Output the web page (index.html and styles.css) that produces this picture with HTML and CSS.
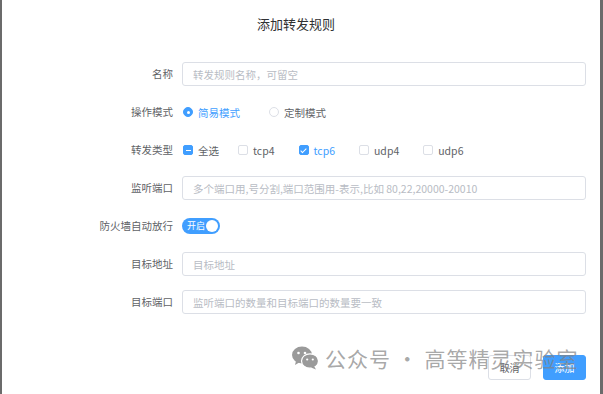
FILE: index.html
```html
<!DOCTYPE html>
<html>
  <head>
    <title>添加转发规则</title>
    <meta charset="UTF-8">
    <link rel="stylesheet" href="styles.css">
  </head>
  <body>
    <div class="dialog">
      <div class="dialog-title">添加转发规则</div>

      <div class="form">
        <div class="row">
          <label class="label">名称</label>
          <div class="field"><input class="text-input" type="text" placeholder="转发规则名称，可留空"></div>
        </div>

        <div class="row">
          <label class="label">操作模式</label>
          <div class="field options">
            <span class="option active radio-first"><span class="radio checked"></span>简易模式</span>
            <span class="option"><span class="radio"></span>定制模式</span>
          </div>
        </div>

        <div class="row">
          <label class="label">转发类型</label>
          <div class="field options">
            <span class="option check-all"><span class="box half"></span>全选</span>
            <span class="option"><span class="box"></span>tcp4</span>
            <span class="option active"><span class="box checked"></span>tcp6</span>
            <span class="option"><span class="box"></span>udp4</span>
            <span class="option"><span class="box"></span>udp6</span>
          </div>
        </div>

        <div class="row">
          <label class="label">监听端口</label>
          <div class="field"><input class="text-input" type="text" placeholder="多个端口用,号分割,端口范围用-表示,比如 80,22,20000-20010"></div>
        </div>

        <div class="row">
          <label class="label">防火墙自动放行</label>
          <div class="field">
            <span class="switch"><span class="switch-text">开启</span><span class="knob"></span></span>
          </div>
        </div>

        <div class="row">
          <label class="label">目标地址</label>
          <div class="field"><input class="text-input" type="text" placeholder="目标地址"></div>
        </div>

        <div class="row">
          <label class="label">目标端口</label>
          <div class="field"><input class="text-input" type="text" placeholder="监听端口的数量和目标端口的数量要一致"></div>
        </div>
      </div>

      <div class="footer">
        <button class="btn">取消</button>
        <button class="btn btn-primary">添加</button>
      </div>

      <!-- watermark over the footer -->
      <div class="watermark">
        <svg width="27" height="24" viewBox="0 0 27 24">
          <ellipse cx="10" cy="9" rx="10" ry="8.5" fill="#9a9a9a"/>
          <path d="M4 15 L3 19 L8 16 Z" fill="#9a9a9a"/>
          <circle cx="6.5" cy="7" r="1.3" fill="#fff"/>
          <circle cx="13" cy="7" r="1.3" fill="#fff"/>
          <ellipse cx="18" cy="15" rx="8.5" ry="7.2" fill="#9a9a9a" stroke="#fff" stroke-width="1.2"/>
          <path d="M22 20 L24 23.5 L19 21.5 Z" fill="#9a9a9a"/>
          <circle cx="15.2" cy="13.5" r="1.1" fill="#fff"/>
          <circle cx="20.8" cy="13.5" r="1.1" fill="#fff"/>
        </svg>
        <span>公众号 · 高等精灵实验室</span>
      </div>
    </div>
  </body>
</html>
```

FILE: styles.css
```css
html, body {
    margin: 0;
    padding: 0;
}
body {
    background-color: #6b6b6b;
    font-family: "Noto Sans CJK SC", "Noto Sans", sans-serif;
    color: #606266;
}
.dialog {
    position: relative;
    margin: 0 3px 0 2px;
    height: 394px;
    background-color: #fff;
}
.dialog-title {
    height: 62px;
    padding-top: 15px;
    padding-right: 10px;
    box-sizing: border-box;
    text-align: center;
    font-size: 13px;
    line-height: 18px;
    color: #303133;
}
.form {
    display: flex;
    flex-direction: column;
    gap: 14px;
    padding-right: 14px;
}
.row {
    display: grid;
    grid-template-columns: 171px 1fr;
    column-gap: 9px;
    height: 24px;
    align-items: center;
}
.label {
    text-align: right;
    font-size: 10.5px;
    line-height: 24px;
    color: #606266;
}
.field {
    height: 24px;
    display: flex;
    align-items: center;
}
.text-input {
    width: 100%;
    height: 24px;
    box-sizing: border-box;
    border: 1px solid #dcdfe6;
    border-radius: 3px;
    padding: 0 10px;
    font-family: inherit;
    font-size: 10.5px;
    color: #606266;
    outline: none;
}
.text-input::placeholder {
    color: #b8bcc4;
}
.options {
    font-size: 10.5px;
}
.option {
    display: flex;
    align-items: center;
    color: #606266;
    margin-right: 24px;
}
.options .option:first-child {
    margin-left: 1px;
}
.option.active {
    color: #409eff;
}
.radio-first {
    margin-right: 29px;
}
.check-all {
    margin-right: 19px;
}
.radio {
    width: 10px;
    height: 10px;
    border: 1px solid #dcdfe6;
    border-radius: 50%;
    box-sizing: border-box;
    margin-right: 5px;
    background-color: #fff;
}
.radio.checked {
    border-color: #409eff;
    background-color: #409eff;
    position: relative;
}
.radio.checked::after {
    content: "";
    position: absolute;
    left: 2.5px;
    top: 2.5px;
    width: 3px;
    height: 3px;
    border-radius: 50%;
    background-color: #fff;
}
.box {
    position: relative;
    width: 10px;
    height: 10px;
    box-sizing: border-box;
    border: 1px solid #dcdfe6;
    border-radius: 2px;
    margin-right: 5px;
    background-color: #fff;
}
.box.half,
.box.checked {
    background-color: #409eff;
    border-color: #409eff;
}
.box.half::after {
    content: "";
    position: absolute;
    left: 1.5px;
    top: 3.5px;
    width: 5px;
    height: 1px;
    background-color: #fff;
}
.box.checked::after {
    content: "";
    position: absolute;
    left: 2.5px;
    top: 0.5px;
    width: 2px;
    height: 5px;
    border: solid #fff;
    border-width: 0 1px 1px 0;
    transform: rotate(45deg);
}
.switch {
    display: inline-flex;
    align-items: center;
    justify-content: space-between;
    width: 38px;
    height: 16px;
    border-radius: 8px;
    background-color: #409eff;
    box-sizing: border-box;
    padding: 0 2px 0 5px;
}
.switch-text {
    color: #fff;
    font-size: 9px;
    line-height: 16px;
}
.knob {
    width: 12px;
    height: 12px;
    border-radius: 50%;
    background-color: #fff;
}
.footer {
    display: flex;
    justify-content: flex-end;
    gap: 12px;
    margin-top: 41px;
    padding-right: 14px;
}
.btn {
    width: 43px;
    height: 25px;
    border: 1px solid #dcdfe6;
    border-radius: 3px;
    background-color: #fff;
    color: #606266;
    font-family: inherit;
    font-size: 10px;
    padding: 0;
}
.btn-primary {
    background-color: #409eff;
    border-color: #409eff;
    color: #fff;
}
.watermark {
    position: absolute;
    left: 290px;
    top: 345px;
    display: flex;
    align-items: center;
    gap: 6px;
    color: rgba(130, 130, 130, 0.7);
    font-size: 21px;
    line-height: 26px;
    letter-spacing: 1px;
}
```
